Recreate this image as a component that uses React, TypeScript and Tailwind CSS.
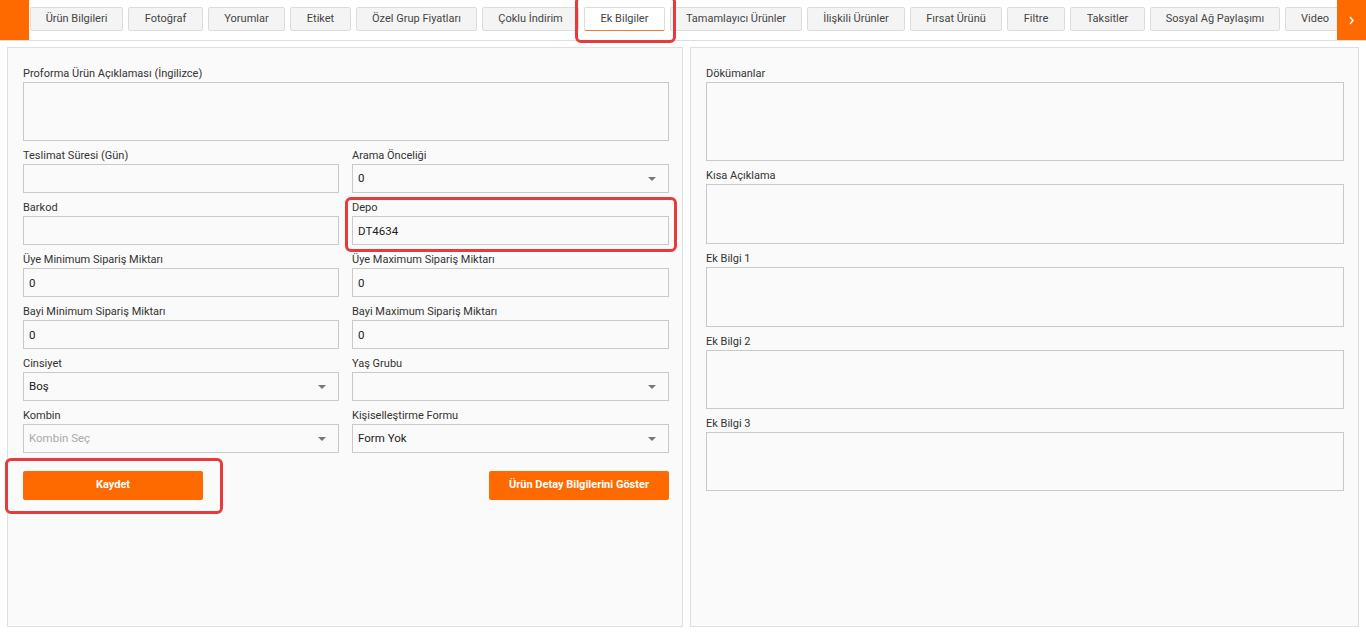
import React from 'react';

const tabs = [
  { label: 'Ürün Bilgileri', w: 'w-[93px]' },
  { label: 'Fotoğraf', w: 'w-[75px]' },
  { label: 'Yorumlar', w: 'w-[77px]' },
  { label: 'Etiket', w: 'w-[61px]' },
  { label: 'Özel Grup Fiyatları', w: 'w-[121px]' },
  { label: 'Çoklu İndirim', w: 'w-[97px]' },
  { label: 'Ek Bilgiler', w: 'w-[81px]', active: true },
  { label: 'Tamamlayıcı Ürünler', w: 'w-[132px]' },
  { label: 'İlişkili Ürünler', w: 'w-[98px]' },
  { label: 'Fırsat Ürünü', w: 'w-[92px]' },
  { label: 'Filtre', w: 'w-[58px]' },
  { label: 'Taksitler', w: 'w-[75px]' },
  { label: 'Sosyal Ağ Paylaşımı', w: 'w-[130px]' },
  { label: 'Video', w: 'w-[60px]' },
];

const Label = ({ children }: { children: React.ReactNode }) => (
  <label className="block text-[11px] leading-[13px] text-[#333] mb-[2px] whitespace-nowrap">{children}</label>
);

const TextField = ({ label, value = '' }: { label: string; value?: string }) => (
  <div>
    <Label>{label}</Label>
    <input
      readOnly
      defaultValue={value}
      className="block w-full h-[29px] border border-[#c9c9c9] bg-[#fafafa] px-[5px] text-[11.5px] text-[#222] outline-none"
    />
  </div>
);

const SelectField = ({ label, value = '', placeholder = false }: { label: string; value?: string; placeholder?: boolean }) => (
  <div>
    <Label>{label}</Label>
    <div className="flex items-center justify-between h-[29px] border border-[#c9c9c9] bg-[#fafafa] pl-[5px] pr-[12px]">
      <span className={`text-[11.5px] ${placeholder ? 'text-[#aaa]' : 'text-[#222]'}`}>{value}</span>
      <span className="w-0 h-0 border-l-[4px] border-r-[4px] border-t-[4px] border-l-transparent border-r-transparent border-t-[#777]" />
    </div>
  </div>
);

const AreaField = ({ label, h }: { label: string; h: string }) => (
  <div>
    <Label>{label}</Label>
    <textarea readOnly className={`block w-full ${h} border border-[#c9c9c9] bg-[#fafafa] resize-none outline-none`} />
  </div>
);

const App: React.FC = () => {
  return (
    <div className="relative w-[1366px] h-[635px] overflow-hidden bg-white font-['Roboto',sans-serif]">
      {/* Tabs bar */}
      <div className="flex h-[41px] border-b border-[#dedede] bg-white">
        <div className="w-[29px] h-[40px] shrink-0 bg-[#ff6a00]" />
        <div className="flex-1 flex gap-[5px] pl-[1px] pt-[7px] overflow-hidden">
          {tabs.map((t) => (
            <div
              key={t.label}
              className={`${t.w} h-[24px] shrink-0 flex items-center justify-center rounded-[2px] border text-[11px] text-[#444] whitespace-nowrap ${
                t.active ? 'bg-white border-[#dcdcdc] border-b-[#ec7a2a]' : 'bg-[#f4f4f4] border-[#dcdcdc]'
              }`}
            >
              {t.label}
            </div>
          ))}
        </div>
        <div className="w-[29px] h-[40px] shrink-0 bg-[#ff6a00] flex items-center justify-center">
          <svg width="5" height="9" viewBox="0 0 5 9" fill="none">
            <path d="M1 1 L4 4.5 L1 8" stroke="white" strokeWidth="1.5" />
          </svg>
        </div>
      </div>

      {/* Panels */}
      <div className="flex gap-[7px] px-[7px] pt-[6px]">
        {/* Left panel */}
        <div className="w-[676px] h-[580px] shrink-0 border border-[#e0e0e0] bg-[#fafafa] pt-[19px] pl-[15px] pr-[13px]">
          <div className="grid grid-cols-[316px_317px] gap-x-[13px] gap-y-[8px]">
            <div className="col-span-2">
              <AreaField label="Proforma Ürün Açıklaması (İngilizce)" h="h-[59px]" />
            </div>
            <TextField label="Teslimat Süresi (Gün)" />
            <SelectField label="Arama Önceliği" value="0" />
            <TextField label="Barkod" />
            <TextField label="Depo" value="DT4634" />
            <TextField label="Üye Minimum Sipariş Miktarı" value="0" />
            <TextField label="Üye Maximum Sipariş Miktarı" value="0" />
            <TextField label="Bayi Minimum Sipariş Miktarı" value="0" />
            <TextField label="Bayi Maximum Sipariş Miktarı" value="0" />
            <SelectField label="Cinsiyet" value="Boş" />
            <SelectField label="Yaş Grubu" />
            <SelectField label="Kombin" value="Kombin Seç" placeholder />
            <SelectField label="Kişiselleştirme Formu" value="Form Yok" />
          </div>
          <div className="flex justify-between mt-[18px]">
            <button className="w-[180px] h-[29px] rounded-[2px] bg-[#ff6a00] text-white text-[11px] font-bold">Kaydet</button>
            <button className="w-[180px] h-[29px] rounded-[2px] bg-[#ff6a00] text-white text-[11px] font-bold">Ürün Detay Bilgilerini Göster</button>
          </div>
        </div>

        {/* Right panel */}
        <div className="flex-1 h-[580px] border border-[#e0e0e0] bg-[#fafafa] pt-[19px] pl-[15px] pr-[14px]">
          <div className="flex flex-col gap-[8px]">
            <AreaField label="Dökümanlar" h="h-[79px]" />
            <AreaField label="Kısa Açıklama" h="h-[60px]" />
            <AreaField label="Ek Bilgi 1" h="h-[60px]" />
            <AreaField label="Ek Bilgi 2" h="h-[59px]" />
            <AreaField label="Ek Bilgi 3" h="h-[59px]" />
          </div>
        </div>
      </div>

      {/* Red highlight annotations */}
      <div className="absolute left-[575px] top-[-4px] w-[101px] h-[47px] border-[3px] border-[#e8393b] rounded-[6px] pointer-events-none" />
      <div className="absolute left-[345px] top-[197px] w-[332px] h-[55px] border-[3px] border-[#e8393b] rounded-[6px] pointer-events-none" />
      <div className="absolute left-[5px] top-[458px] w-[218px] h-[56px] border-[3px] border-[#e8393b] rounded-[6px] pointer-events-none" />
    </div>
  );
};

export default App;
